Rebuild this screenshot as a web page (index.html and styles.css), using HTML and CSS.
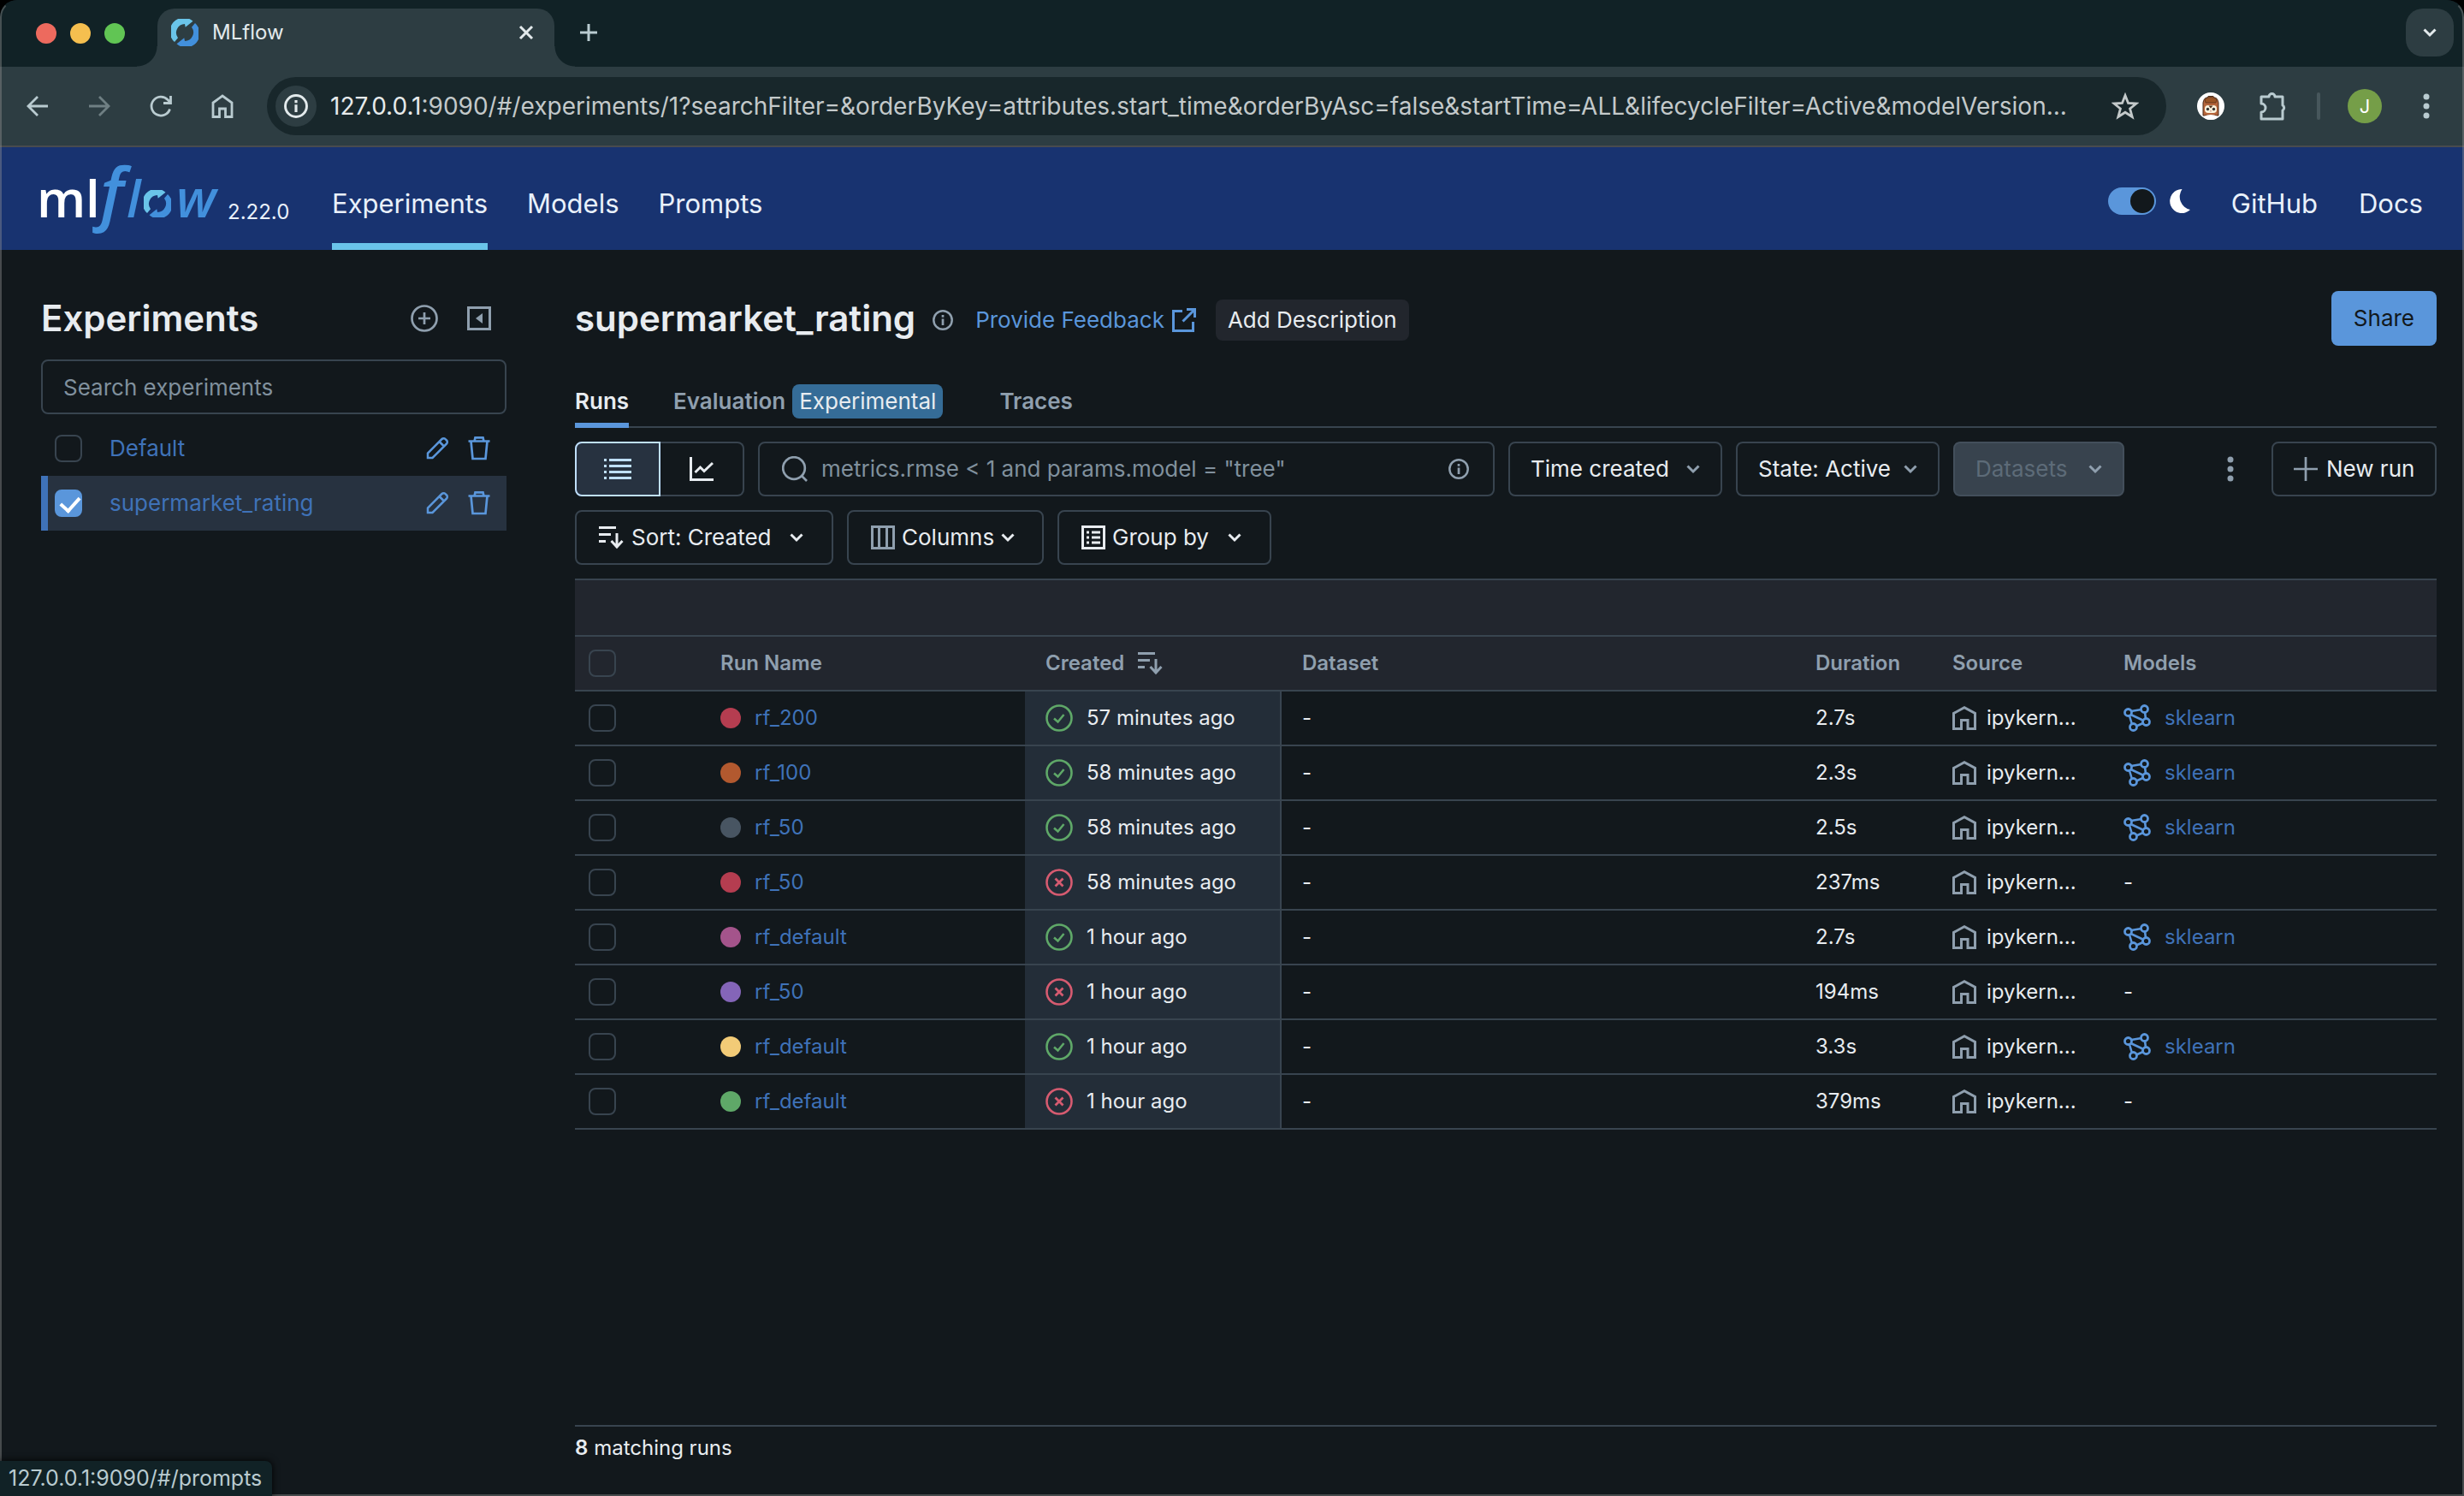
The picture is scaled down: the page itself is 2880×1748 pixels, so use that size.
FILE: index.html
```html
<!DOCTYPE html>
<html lang="en">
<head>
<meta charset="utf-8">
<title>MLflow</title>
<link rel="stylesheet" href="styles.css">
</head>
<body>
<svg class="sprite" aria-hidden="true">
  <symbol id="swirl" viewBox="0 0 32 32">
    <path fill="#6ac4e9" d="M4 27A16 16 0 0 1 25.500 2.700L16.700 9.700L16 6A10.200 10.200 0 0 0 8 22.300Z"/>
    <path fill="#4290dc" d="M28 5A16 16 0 0 1 6.500 29.300L15.300 22.300L16 26A10.200 10.200 0 0 0 24 9.700Z"/>
  </symbol>
  <symbol id="chev" viewBox="0 0 16 16"><path d="M1.500 4.500L8 11L14.500 4.500" fill="none" stroke="currentColor" stroke-width="3"/></symbol>
  <symbol id="info" viewBox="0 0 24 24"><circle cx="12" cy="12" r="10.700" fill="none" stroke="currentColor" stroke-width="2.500"/><path d="M12 10.500V18M12 6V8.700" stroke="currentColor" stroke-width="2.700"/></symbol>
  <symbol id="pencil" viewBox="0 0 28 28"><path d="M2 25V19.500L18.500 3a2.800 2.800 0 0 1 4 0l1.500 1.500a2.800 2.800 0 0 1 0 4L7.500 25ZM15.500 6L21 11.500" fill="none" stroke="currentColor" stroke-width="2.500"/></symbol>
  <symbol id="trash" viewBox="0 0 28 28"><path d="M1.500 5.500H26.500M8.500 5.500L9.500 1.300H18.500L19.500 5.500M4.500 5.500L6.500 26H21.500L23.500 5.500" fill="none" stroke="currentColor" stroke-width="2.700"/></symbol>
  <symbol id="sort" viewBox="0 0 30 28"><path d="M0 2.500H20M0 10.500H14M0 18.500H8M21 9V25M14.500 18L21 25L27.500 18" fill="none" stroke="currentColor" stroke-width="3"/></symbol>
  <symbol id="house" viewBox="0 0 28 28"><path d="M1.500 26.500V8.500L14 1.800L26.500 8.500V26.500H18V16.500H10.500V26.500Z" fill="none" stroke="currentColor" stroke-width="3"/></symbol>
  <symbol id="model" viewBox="0 0 32 32"><path d="M8.500 12L22.500 18.500M9 8L21 6M7 13.500L10 23.500M25 9L26 17M15 25.500L24 21.500" stroke="currentColor" stroke-width="2.600"/><g fill="none" stroke="currentColor" stroke-width="2.800"><circle cx="5.500" cy="9.500" r="4"/><circle cx="24.500" cy="5.500" r="4"/><circle cx="26.500" cy="20.500" r="4"/><circle cx="11.500" cy="26.500" r="4"/></g></symbol>
  <symbol id="ok" viewBox="0 0 32 32"><circle cx="16" cy="16" r="14.500" fill="none" stroke="currentColor" stroke-width="2.600"/><path d="M10 16.500L14.500 20.500L21.500 12" fill="none" stroke="currentColor" stroke-width="2.600"/></symbol>
  <symbol id="bad" viewBox="0 0 32 32"><circle cx="16" cy="16" r="14.500" fill="none" stroke="currentColor" stroke-width="2.600"/><path d="M11.500 11.500L20.500 20.500M20.500 11.500L11.500 20.500" fill="none" stroke="currentColor" stroke-width="2.800"/></symbol>
  <symbol id="dots" viewBox="0 0 8 30"><g fill="currentColor"><circle cx="4" cy="4" r="3.500"/><circle cx="4" cy="15" r="3.500"/><circle cx="4" cy="26" r="3.500"/></g></symbol>
</svg>

<div class="window">
  <div class="tabstrip">
    <div class="lights"><span class="light red"></span><span class="light yellow"></span><span class="light green"></span></div>
    <div class="tab">
      <svg class="i32"><use href="#swirl"/></svg>
      <span class="tab-title">MLflow</span>
      <button class="plain" aria-label="Close tab"><svg class="i18" viewBox="0 0 18 18"><path d="M2 2L16 16M16 2L2 16" stroke="#e3eaec" stroke-width="3"/></svg></button>
    </div>
    <button class="plain new-tab" aria-label="New tab"><svg class="i20" viewBox="0 0 20 20"><path d="M10 0V20M0 10H20" stroke="#b9cbd0" stroke-width="3"/></svg></button>
    <button class="tab-search" aria-label="Search tabs"><svg class="i16"><use href="#chev"/></svg></button>
  </div>

  <div class="browserbar">
    <button class="plain nav-btn" aria-label="Back"><svg class="i28" viewBox="0 0 28 28"><path d="M26 14H3M14 3L3 14L14 25" fill="none" stroke="currentColor" stroke-width="2.800"/></svg></button>
    <button class="plain nav-btn off" aria-label="Forward"><svg class="i28" viewBox="0 0 28 28"><path d="M2 14H25M14 3L25 14L14 25" fill="none" stroke="currentColor" stroke-width="2.800"/></svg></button>
    <button class="plain nav-btn" aria-label="Reload"><svg class="i28" viewBox="0 0 28 28"><path d="M24.500 17.500A11 11 0 1 1 22 6.500L25 9.500M25.500 2V10.500H17" fill="none" stroke="currentColor" stroke-width="2.800"/></svg></button>
    <button class="plain nav-btn" aria-label="Home"><svg class="i28" viewBox="0 0 28 28"><path d="M3 26.500V10L14 2L25 10V26.500H17.500V17H10.500V26.500Z" fill="none" stroke="currentColor" stroke-width="2.800"/></svg></button>
    <div class="omnibox">
      <span class="site"><svg class="i28"><use href="#info"/></svg></span>
      <span class="url"><b>127.0.0.1</b>:9090/#/experiments/1?searchFilter=&amp;orderByKey=attributes.start_time&amp;orderByAsc=false&amp;startTime=ALL&amp;lifecycleFilter=Active&amp;modelVersion...</span>
      <svg class="i32 star" viewBox="0 0 32 32"><path d="M16 3.500L19.500 12.500L29 13L21.600 19L24.200 28.500L16 23.200L7.800 28.500L10.400 19L3 13L12.500 12.500Z" fill="none" stroke="currentColor" stroke-width="2.800"/></svg>
    </div>
    <svg class="i32 owl" viewBox="0 0 32 32"><circle cx="16" cy="16" r="16" fill="#fff"/><path d="M7 27V12Q8 6 12 6L13 4.500H19L20 6Q24 6 25 12V27Z" fill="#b5653a" stroke="#4a2c1a"/><path d="M9 8Q16 3 23 8L22 12H10Z" fill="#9a5526" stroke="#4a2c1a" stroke-width=".7"/><rect x="9" y="15" width="14" height="9" rx="4" fill="#fbf3dd"/><circle cx="12.500" cy="19.500" r="1.700" fill="#333"/><circle cx="19.500" cy="19.500" r="1.700" fill="#333"/><path d="M13.500 15.500h5l-2.500 3Z" fill="#4a2c1a"/><path d="M15 21h2l-1 2Z" fill="#cc9988"/><path d="M8 28Q16 24 24 28L22 31Q16 33 10 31Z" fill="#fff"/></svg>
    <svg class="i34 puzzle" viewBox="0 0 34 34"><path d="M3 6H12A3.500 3.500 0 0 1 19 6H28V16A3.500 3.500 0 0 1 28 22V32H3V24A5 5 0 0 0 3 14Z" fill="none" stroke="currentColor" stroke-width="3" stroke-linejoin="round"/></svg>
    <span class="divider"></span>
    <span class="avatar">J</span>
    <button class="plain menu-btn" aria-label="Browser menu"><svg class="dots"><use href="#dots"/></svg></button>
  </div>

  <header class="header">
    <a class="logo" href="#/" aria-label="mlflow">
      <svg width="216" height="92" viewBox="0 0 216 92">
        <g class="logo-white"><text x="-3" y="64">m</text><text x="54" y="64">l</text></g>
        <g class="logo-blue"><text class="logo-f" x="71" y="64">f</text><text x="102" y="64">l</text><text class="logo-w" x="160" y="64">w</text></g>
        <use href="#swirl" x="122" y="32" width="32" height="32"/>
      </svg>
    </a>
    <span class="version">2.22.0</span>
    <nav class="nav">
      <a class="current" href="#/experiments">Experiments</a>
      <a href="#/models">Models</a>
      <a href="#/prompts">Prompts</a>
    </nav>
    <div class="header-end">
      <label class="theme">
        <input type="checkbox" role="switch" checked aria-label="Dark theme">
        <svg class="moon" viewBox="1 0 24 28"><path d="M15.500 0A14 14 0 1 0 25 24A15.500 15.500 0 0 1 15.500 0Z" fill="#fff"/></svg>
      </label>
      <a href="#github">GitHub</a>
      <a href="#docs">Docs</a>
    </div>
  </header>

  <div class="page">
    <aside class="sidebar">
      <div class="side-head">
        <h2>Experiments</h2>
        <button class="plain" aria-label="Create experiment"><svg class="i32" viewBox="0 0 32 32"><circle cx="16" cy="16" r="14.500" fill="none" stroke="currentColor" stroke-width="2.700"/><path d="M16 9V23M9 16H23" stroke="currentColor" stroke-width="2.700"/></svg></button>
        <button class="plain" aria-label="Hide experiments"><svg class="i28" viewBox="0 0 28 28"><rect x="1.500" y="1.500" width="25" height="25" fill="none" stroke="currentColor" stroke-width="3"/><path d="M18 8V20L10 14Z" fill="currentColor"/></svg></button>
      </div>
      <input class="search-exp" type="text" placeholder="Search experiments" aria-label="Search experiments">
      <ul class="exp-list">
        <li><input class="check" type="checkbox" id="e0"><label for="e0">Default</label><button class="plain" aria-label="Rename Default"><svg class="i28"><use href="#pencil"/></svg></button><button class="plain" aria-label="Delete Default"><svg class="i28"><use href="#trash"/></svg></button></li>
        <li class="selected"><input class="check" type="checkbox" id="e1" checked><label for="e1">supermarket_rating</label><button class="plain" aria-label="Rename supermarket_rating"><svg class="i28"><use href="#pencil"/></svg></button><button class="plain" aria-label="Delete supermarket_rating"><svg class="i28"><use href="#trash"/></svg></button></li>
      </ul>
    </aside>

    <main class="main">
      <div class="title-row">
        <h1>supermarket_rating</h1>
        <div class="title-extra">
          <svg class="i24 muted"><use href="#info"/></svg>
          <a class="feedback" href="#feedback">Provide Feedback <svg class="i30" viewBox="0 0 30 30"><path d="M13 4.500H2.500V27.500H25.500V17M18 2.500H27.500V12M27 3L13.500 16.500" fill="none" stroke="currentColor" stroke-width="3"/></svg></a>
          <button class="add-desc">Add Description</button>
        </div>
        <button class="share">Share</button>
      </div>

      <div class="tabs" role="tablist">
        <button class="view-tab active" role="tab" aria-selected="true">Runs</button>
        <button class="view-tab" role="tab">Evaluation <span class="tag">Experimental</span></button>
        <button class="view-tab" role="tab">Traces</button>
      </div>

      <div class="controls">
        <div class="toggle">
          <button class="on" aria-label="Table view"><svg class="i32" viewBox="0 0 32 32"><path d="M6 5.500H32M6 12.500H32M6 19.500H32M6 26.500H32M0 5.500H3M0 12.500H3M0 19.500H3M0 26.500H3" stroke="currentColor" stroke-width="3"/></svg></button>
          <button aria-label="Chart view"><svg class="i28" viewBox="0 0 28 28"><path d="M1.500 0V26.500H28M6.500 18L12.500 12L17 16.500L27 7" fill="none" stroke="currentColor" stroke-width="3"/></svg></button>
        </div>
        <div class="search-runs">
          <svg class="i30 muted" viewBox="0 0 30 30"><circle cx="14" cy="14" r="12.800" fill="none" stroke="currentColor" stroke-width="2.700"/><path d="M23 23L29 29" stroke="currentColor" stroke-width="2.700"/></svg>
          <input type="text" placeholder="metrics.rmse &lt; 1 and params.model = &quot;tree&quot;" aria-label="Search runs">
          <svg class="i24 muted"><use href="#info"/></svg>
        </div>
        <div class="pick pick-time"><select aria-label="Time created"><option>Time created</option></select><svg class="i16"><use href="#chev"/></svg></div>
        <div class="pick pick-state"><select aria-label="State"><option>State: Active</option></select><svg class="i16"><use href="#chev"/></svg></div>
        <div class="pick pick-data disabled"><select aria-label="Datasets" disabled><option>Datasets</option></select><svg class="i16"><use href="#chev"/></svg></div>
        <button class="plain more" aria-label="More actions"><svg class="dots"><use href="#dots"/></svg></button>
        <button class="btn new-run"><svg class="i28 muted" viewBox="0 0 28 28"><path d="M14 0V28M0 14H28" stroke="currentColor" stroke-width="2.700"/></svg>New run</button>
      </div>
      <div class="controls">
        <button class="btn sort-btn" aria-haspopup="menu"><svg class="sort"><use href="#sort"/></svg>Sort: Created<svg class="i16 far"><use href="#chev"/></svg></button>
        <button class="btn columns-btn" aria-haspopup="menu"><svg class="i28 muted" viewBox="0 0 28 28"><path d="M1.500 1.500H26.500V26.500H1.500ZM9.500 1V27M18.500 1V27" fill="none" stroke="currentColor" stroke-width="3"/></svg>Columns<svg class="i16"><use href="#chev"/></svg></button>
        <button class="btn group-btn" aria-haspopup="menu"><svg class="i28" viewBox="0 0 28 28"><path d="M1.500 1.500H26.500V26.500H1.500ZM12 8H22M12 14H22M12 20H22M6 8H9M6 14H9M6 20H9" fill="none" stroke="currentColor" stroke-width="3"/></svg>Group by<svg class="i16 far"><use href="#chev"/></svg></button>
      </div>

      <table class="runs">
        <colgroup><col class="c-check"><col class="c-name"><col class="c-created"><col class="c-dataset"><col class="c-duration"><col class="c-source"><col></colgroup>
        <thead>
          <tr class="group-row"><th colspan="7"></th></tr>
          <tr><th><input class="check" type="checkbox" aria-label="Select all runs"></th><th>Run Name</th><th><span class="cell">Created <svg class="sort"><use href="#sort"/></svg></span></th><th>Dataset</th><th>Duration</th><th>Source</th><th>Models</th></tr>
        </thead>
        <tbody>
          <tr><td><input class="check" type="checkbox" aria-label="Select rf_200"></td><td><span class="cell"><i class="dot" style="background:#b53d50"></i><a href="#run1">rf_200</a></span></td><td class="created"><span class="cell"><svg class="i32 ok"><use href="#ok"/></svg>57 minutes ago</span></td><td>-</td><td>2.7s</td><td><span class="cell src"><svg class="i28"><use href="#house"/></svg>ipykern...</span></td><td><span class="cell mdl"><svg class="i32"><use href="#model"/></svg><a href="#m1">sklearn</a></span></td></tr>
          <tr><td><input class="check" type="checkbox" aria-label="Select rf_100"></td><td><span class="cell"><i class="dot" style="background:#b2592f"></i><a href="#run2">rf_100</a></span></td><td class="created"><span class="cell"><svg class="i32 ok"><use href="#ok"/></svg>58 minutes ago</span></td><td>-</td><td>2.3s</td><td><span class="cell src"><svg class="i28"><use href="#house"/></svg>ipykern...</span></td><td><span class="cell mdl"><svg class="i32"><use href="#model"/></svg><a href="#m2">sklearn</a></span></td></tr>
          <tr><td><input class="check" type="checkbox" aria-label="Select rf_50"></td><td><span class="cell"><i class="dot" style="background:#485562"></i><a href="#run3">rf_50</a></span></td><td class="created"><span class="cell"><svg class="i32 ok"><use href="#ok"/></svg>58 minutes ago</span></td><td>-</td><td>2.5s</td><td><span class="cell src"><svg class="i28"><use href="#house"/></svg>ipykern...</span></td><td><span class="cell mdl"><svg class="i32"><use href="#model"/></svg><a href="#m3">sklearn</a></span></td></tr>
          <tr><td><input class="check" type="checkbox" aria-label="Select rf_50"></td><td><span class="cell"><i class="dot" style="background:#b53d50"></i><a href="#run4">rf_50</a></span></td><td class="created"><span class="cell"><svg class="i32 bad"><use href="#bad"/></svg>58 minutes ago</span></td><td>-</td><td>237ms</td><td><span class="cell src"><svg class="i28"><use href="#house"/></svg>ipykern...</span></td><td>-</td></tr>
          <tr><td><input class="check" type="checkbox" aria-label="Select rf_default"></td><td><span class="cell"><i class="dot" style="background:#a4548b"></i><a href="#run5">rf_default</a></span></td><td class="created"><span class="cell"><svg class="i32 ok"><use href="#ok"/></svg>1 hour ago</span></td><td>-</td><td>2.7s</td><td><span class="cell src"><svg class="i28"><use href="#house"/></svg>ipykern...</span></td><td><span class="cell mdl"><svg class="i32"><use href="#model"/></svg><a href="#m5">sklearn</a></span></td></tr>
          <tr><td><input class="check" type="checkbox" aria-label="Select rf_50"></td><td><span class="cell"><i class="dot" style="background:#8465b8"></i><a href="#run6">rf_50</a></span></td><td class="created"><span class="cell"><svg class="i32 bad"><use href="#bad"/></svg>1 hour ago</span></td><td>-</td><td>194ms</td><td><span class="cell src"><svg class="i28"><use href="#house"/></svg>ipykern...</span></td><td>-</td></tr>
          <tr><td><input class="check" type="checkbox" aria-label="Select rf_default"></td><td><span class="cell"><i class="dot" style="background:#f2cb77"></i><a href="#run7">rf_default</a></span></td><td class="created"><span class="cell"><svg class="i32 ok"><use href="#ok"/></svg>1 hour ago</span></td><td>-</td><td>3.3s</td><td><span class="cell src"><svg class="i28"><use href="#house"/></svg>ipykern...</span></td><td><span class="cell mdl"><svg class="i32"><use href="#model"/></svg><a href="#m7">sklearn</a></span></td></tr>
          <tr><td><input class="check" type="checkbox" aria-label="Select rf_default"></td><td><span class="cell"><i class="dot" style="background:#5fa868"></i><a href="#run8">rf_default</a></span></td><td class="created"><span class="cell"><svg class="i32 bad"><use href="#bad"/></svg>1 hour ago</span></td><td>-</td><td>379ms</td><td><span class="cell src"><svg class="i28"><use href="#house"/></svg>ipykern...</span></td><td>-</td></tr>
        </tbody>
      </table>
      <footer class="count"><b>8</b> matching runs</footer>
    </main>
  </div>
  <div class="status">127.0.0.1:9090/#/prompts</div>
</div>
</body>
</html>
```
FILE: styles.css
```css
:root {
  --bg: #12181c;
  --line: #38444f;
  --text: #e8ecf0;
  --muted: #8f9fae;
  --accent: #5a96db;
  --link: #3f72b8;
  --chrome: #2d3d42;
  --chrome-dark: #112226;
}
* { box-sizing: border-box; }
body {
  margin: 0;
  background: #000;
  color: var(--text);
  font: 26px/40px Inter, "Liberation Sans", sans-serif;
}
button, input, select { font: inherit; color: inherit; margin: 0; }
button { cursor: pointer; display: flex; align-items: center; }
svg { display: block; flex: none; }
a { color: inherit; text-decoration: none; }
h1, h2 { margin: 0; font-size: 42px; line-height: 56px; font-weight: 600; }
.sprite { position: absolute; width: 0; height: 0; }
.plain { background: none; border: 0; padding: 0; }
.i16 { width: 16px; height: 16px; }
.i18 { width: 18px; height: 18px; }
.i20 { width: 20px; height: 20px; }
.i24 { width: 24px; height: 24px; }
.i28 { width: 28px; height: 28px; }
.i30 { width: 30px; height: 30px; }
.i32 { width: 32px; height: 32px; }
.i34 { width: 34px; height: 34px; }
.sort { width: 30px; height: 28px; }
.dots { width: 8px; height: 30px; }
.muted { color: var(--muted); }

.window {
  position: relative;
  display: flex;
  flex-direction: column;
  min-height: 100vh;
  background: var(--bg);
  border-radius: 20px 20px 0 0;
  overflow: hidden;
}
.window::after {
  content: "";
  position: absolute;
  inset: 0;
  border: 2px solid rgba(150, 150, 150, 0.4);
  border-top-color: transparent;
  border-radius: 20px 20px 0 0;
  pointer-events: none;
}

/* Browser chrome */
.tabstrip { display: flex; height: 78px; padding: 10px 12px 0 42px; background: var(--chrome-dark); }
.lights { display: flex; gap: 16px; padding-top: 17px; width: 142px; }
.light { width: 24px; height: 24px; border-radius: 50%; }
.red { background: #ed6a5e; }
.yellow { background: #f5bf4f; }
.green { background: #61c554; }
.tab {
  position: relative;
  display: flex;
  align-items: center;
  gap: 16px;
  width: 464px;
  padding: 0 24px 12px 16px;
  background: var(--chrome);
  border-radius: 20px 20px 0 0;
}
.tab::before, .tab::after { content: ""; position: absolute; bottom: 0; width: 24px; height: 24px; }
.tab::before { right: 100%; background: radial-gradient(circle at 0 0, transparent 23px, var(--chrome) 24px); }
.tab::after { left: 100%; background: radial-gradient(circle at 100% 0, transparent 23px, var(--chrome) 24px); }
.tab-title { flex: 1; font-size: 24px; line-height: 32px; color: #e3eaec; }
.new-tab { width: 80px; height: 56px; justify-content: center; }
.tab-search { width: 56px; height: 56px; margin-left: auto; justify-content: center; padding: 0; border: 0; border-radius: 20px; background: var(--chrome); color: #e3eaec; }

.browserbar {
  display: flex;
  align-items: center;
  height: 94px;
  padding: 0 40px 0 8px;
  background: var(--chrome);
  border-bottom: 2px solid #484b4e;
  color: #b9cbd0;
}
.nav-btn { width: 72px; height: 56px; justify-content: center; }
.nav-btn.off { color: #6f7f83; }
.omnibox {
  display: flex;
  align-items: center;
  flex: 1;
  min-width: 0;
  height: 68px;
  margin: 0 36px 0 16px;
  padding: 0 32px 0 10px;
  border-radius: 34px;
  background: #18272b;
}
.site { display: grid; place-items: center; width: 48px; height: 48px; margin-right: 16px; border-radius: 50%; background: var(--chrome); color: #e3eaec; }
.url { flex: 1; min-width: 0; overflow: hidden; white-space: nowrap; font-size: 28px; color: #c3c9ca; }
.url b { font-weight: 400; color: #e6eaeb; }
.star { color: #c3c9ca; }
.puzzle { margin: 0 34px 0 40px; }
.divider { width: 4px; height: 32px; background: #47575c; border-radius: 2px; }
.avatar { width: 40px; height: 40px; margin: 0 48px 0 32px; border-radius: 50%; background: #759e48; color: #fff; font-size: 22px; text-align: center; }

/* Application header */
.header { display: flex; align-items: stretch; height: 120px; padding: 0 48px 0 46px; background: #183370; color: #e9f1fb; font-size: 31px; }
.logo { width: 220px; padding-top: 18px; }
.logo svg { overflow: visible; }
.logo text { font: 600 60px "Open Sans", sans-serif; }
.logo-white { fill: #fff; }
.logo-blue { fill: #4290dc; }
.logo .logo-blue text { font-style: italic; }
.logo .logo-blue .logo-f { font-size: 80px; }
.logo .logo-blue .logo-w { font-size: 62px; }
.version { width: 122px; padding-top: 56px; font-size: 24px; }
.nav { display: flex; gap: 46px; }
.nav a, .header-end a { padding-top: 46px; }
.nav .current { border-bottom: 8px solid #6ac4e9; }
.header-end { display: flex; gap: 48px; margin-left: auto; }
.theme { display: flex; align-items: center; gap: 16px; height: 120px; padding-top: 6px; }
.theme input { appearance: none; width: 56px; height: 32px; border-radius: 16px; background: var(--accent); padding: 2px; display: flex; justify-content: flex-end; }
.theme input::before { content: ""; width: 28px; height: 28px; border-radius: 50%; background: var(--bg); }
.moon { width: 24px; height: 28px; }

/* Page */
.page { display: flex; flex: 1; gap: 80px; padding: 48px 32px 36px 48px; }
.sidebar { width: 544px; flex: none; }
.side-head { display: flex; align-items: center; gap: 34px; height: 64px; padding-right: 18px; margin-bottom: 16px; color: var(--muted); }
.side-head h2 { flex: 1; color: var(--text); }
.search-exp { width: 100%; height: 64px; padding: 0 24px; border: 2px solid var(--line); border-radius: 8px; background: none; }
::placeholder { color: #80909d; opacity: 1; }
.exp-list { list-style: none; margin: 8px 0 0; padding: 0; }
.exp-list li { display: flex; align-items: center; height: 64px; padding: 0 18px 0 8px; border-left: 8px solid transparent; color: var(--accent); gap: 20px; }
.exp-list .selected { background: #273240; border-left-color: #3f72b8; }
.exp-list label { flex: 1; margin-left: 12px; color: var(--link); }
.check { appearance: none; display: block; flex: none; width: 32px; height: 32px; border: 2px solid var(--line); border-radius: 8px; }
.check:checked { background: var(--accent); border-color: var(--accent); }
.check:checked::before { content: ""; display: block; width: 10px; height: 18px; margin: 2px 0 0 9px; border: solid #fff; border-width: 0 4px 4px 0; transform: rotate(42deg); }

.main { display: flex; flex-direction: column; flex: 1; min-width: 0; }
.title-row { display: flex; align-items: center; height: 64px; gap: 20px; }
.title-extra { display: flex; align-items: center; gap: 18px; padding-top: 4px; }
.feedback { display: flex; align-items: center; gap: 8px; margin-left: 8px; color: var(--accent); }
.add-desc { height: 48px; margin-left: 4px; padding: 0 14px; border: 0; border-radius: 8px; background: #22262d; }
.share { height: 64px; margin-left: auto; padding: 0 26px; border: 0; border-radius: 8px; background: var(--accent); color: #12181c; }

.tabs { display: flex; gap: 52px; height: 64px; margin: 32px 0 16px; border-bottom: 2px solid var(--line); }
.view-tab { height: 64px; gap: 8px; padding: 8px 0 0; border: 0; border-bottom: 6px solid transparent; background: none; color: var(--muted); font-weight: 600; }
.view-tab:last-child { margin-left: 14px; }
.view-tab.active { color: var(--text); border-color: var(--accent); }
.tag { height: 40px; padding: 0 8px; border-radius: 8px; background: #356c97; color: var(--text); font-weight: 400; }

.controls { display: flex; gap: 16px; height: 64px; margin-bottom: 16px; }
.btn { gap: 8px; padding: 0 26px; border: 2px solid var(--line); border-radius: 8px; background: none; white-space: nowrap; }
.toggle { display: flex; width: 198px; }
.toggle button { flex: 1; justify-content: center; padding: 0; background: none; border: 2px solid var(--line); border-left: 0; border-radius: 0 8px 8px 0; }
.toggle .on { background: #273240; color: #bfdfff; border: 2px solid #bfdfff; border-radius: 8px 0 0 8px; }
.search-runs { display: flex; align-items: center; flex: 1; gap: 16px; padding: 0 28px 0 26px; border: 2px solid var(--line); border-radius: 8px; }
.search-runs input { flex: 1; min-width: 0; padding: 0; border: 0; background: none; }
.pick { display: grid; grid-template-columns: 1fr 48px; align-items: center; border: 2px solid var(--line); border-radius: 8px; }
.pick select { grid-area: 1 / 1 / 2 / 3; height: 60px; padding: 0 24px; border: 0; background: none; appearance: none; }
.pick svg { grid-area: 1 / 2; color: var(--muted); pointer-events: none; margin-left: 8px; }
.pick-time { width: 250px; }
.pick-state { width: 238px; }
.pick-data { width: 200px; }
.disabled { background: #38434e; border-color: #434f5b; }
.disabled select { color: #5d6b78; opacity: 1; }
.more { width: 40px; margin: 0 12px 0 88px; justify-content: center; color: var(--muted); }
.new-run { width: 193px; gap: 10px; padding: 0 24px; }
.sort-btn { width: 302px; }
.columns-btn { width: 230px; }
.group-btn { width: 250px; }
.far { margin-left: 14px; }

/* Runs table */
.runs { width: 100%; table-layout: fixed; border-collapse: separate; border-spacing: 0; border-top: 2px solid var(--line); font-size: 24px; }
.c-check { width: 154px; }
.c-name { width: 372px; }
.c-created { width: 300px; }
.c-dataset { width: 600px; }
.c-duration { width: 160px; }
.c-source { width: 200px; }
.runs th, .runs td { height: 64px; padding: 0 0 0 24px; border-bottom: 2px solid var(--line); text-align: left; white-space: nowrap; }
.runs th { background: #22262e; color: var(--muted); font-weight: 600; }
.runs .group-row th { height: 66px; }
.runs tr > :nth-child(-n+2) { padding-left: 16px; }
.runs .created { background: #232d38; border-right: 2px solid var(--line); }
.cell { display: flex; align-items: center; gap: 16px; }
.cell a { color: var(--link); }
.dot { width: 24px; height: 24px; border-radius: 50%; }
.ok { color: #5fa868; }
.bad { color: #d65b70; }
.src { gap: 12px; }
.src svg { color: var(--muted); }
.mdl svg { color: var(--accent); }
.count { margin-top: auto; padding-top: 5px; border-top: 2px solid var(--line); font-size: 24px; }
.count b { font-weight: 600; }

.status {
  position: absolute;
  left: 0;
  bottom: 0;
  height: 41px;
  padding: 0 12px 0 10px;
  border-radius: 0 8px 0 0;
  background: #112226;
  color: #b9cbd0;
  font-size: 25px;
  box-shadow: 0 0 8px #000;
  z-index: 1;
}
```
